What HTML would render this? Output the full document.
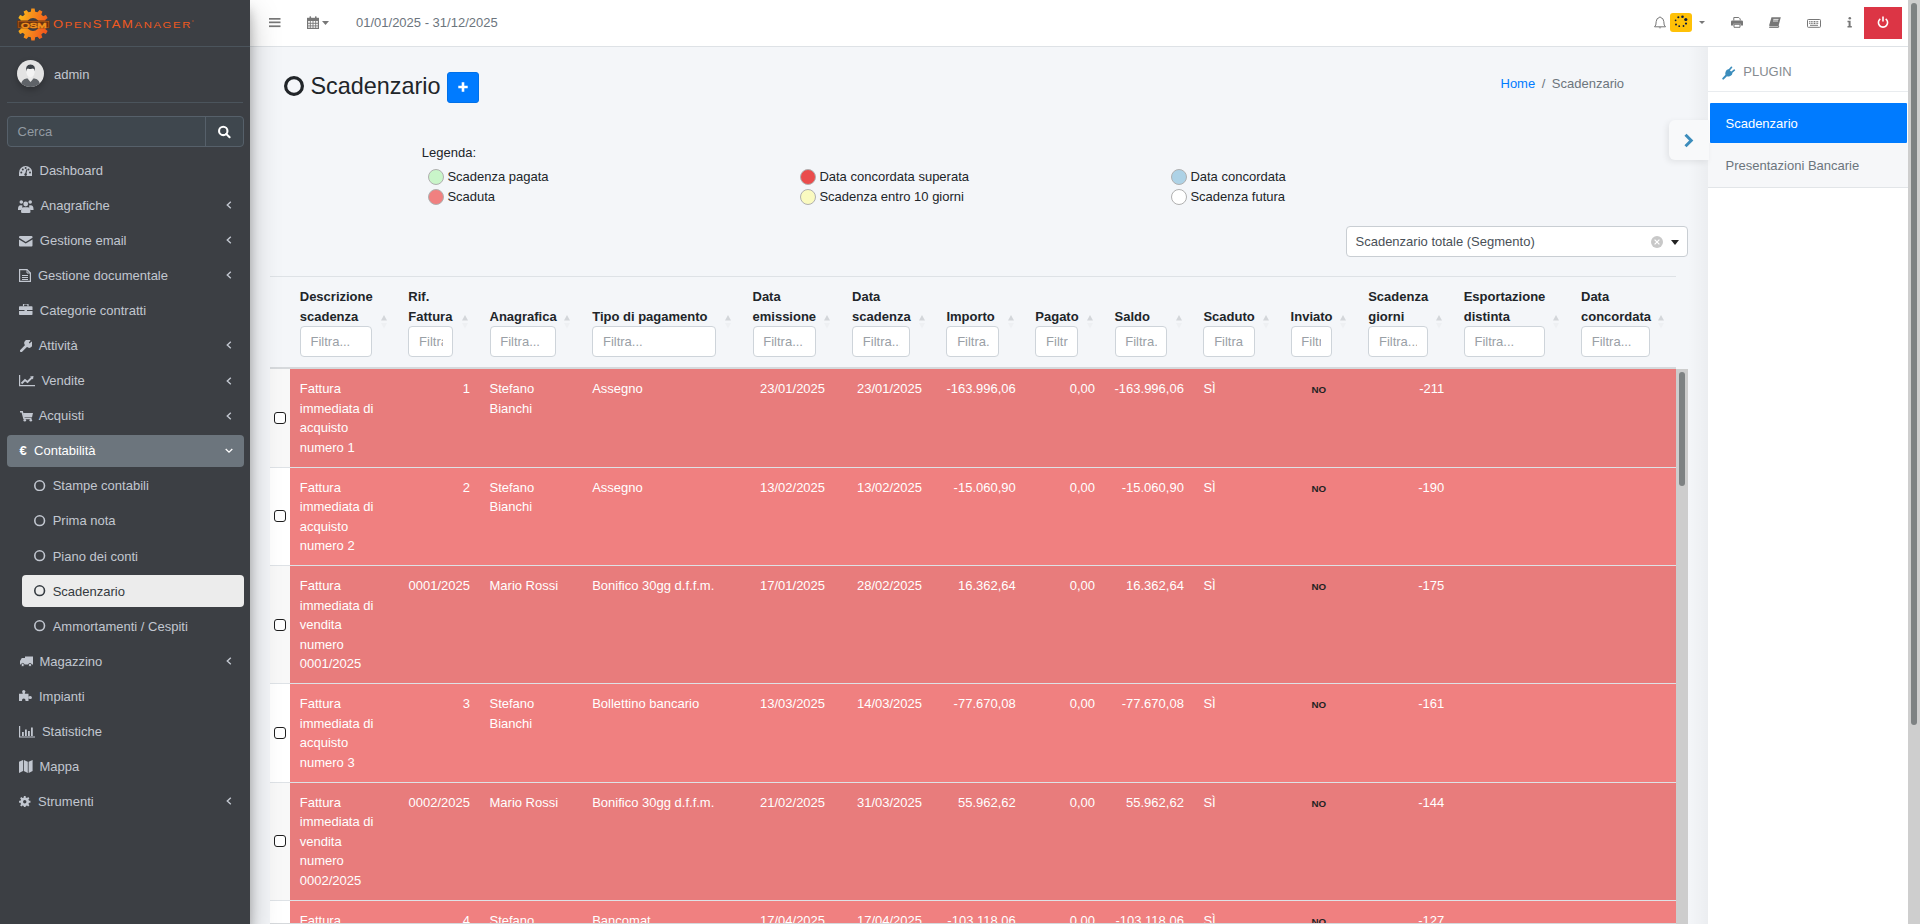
<!DOCTYPE html><html><head><meta charset="utf-8"><style>*{box-sizing:border-box;}
html,body{margin:0;padding:0;}
body{width:1920px;height:924px;overflow:hidden;position:relative;font-family:"Liberation Sans",sans-serif;font-size:13px;line-height:19.5px;color:#212529;background:#f4f6f9;}
.abs{position:absolute;white-space:nowrap;}
svg{display:block;}
#sb{position:absolute;left:0;top:0;width:250px;height:924px;background:#3c3f44;z-index:5;box-shadow:0 14px 28px rgba(0,0,0,.25),0 10px 10px rgba(0,0,0,.22);}
#sb .brandline{position:absolute;left:0;top:46px;width:250px;height:1px;background:#4b545c;}
#sb .userline{position:absolute;left:7px;top:102px;width:236px;height:1px;background:#4b545c;}
.logo-t{color:#f05a20;font-size:10.8px;line-height:12px;letter-spacing:1.25px;font-weight:400;transform:scaleX(1.3);transform-origin:0 0;}
.logo-t .bc{font-size:10px;}
.logo-t .sc{font-size:8.7px;}
.act1{position:absolute;left:7px;width:237px;height:32px;background:#6c757d;border-radius:4px;}
.act2{position:absolute;left:22px;width:222px;height:32px;background:#ececec;border-radius:4px;}
#nb{position:absolute;left:250px;top:0;width:1658px;height:47px;background:#fff;border-bottom:1px solid #dee2e6;z-index:2;}
#ct{position:absolute;left:0;top:0;width:1908px;height:924px;z-index:1;}
#cs{position:absolute;left:1708px;top:47px;width:200px;height:877px;background:#fff;z-index:3;}
#scroll{position:absolute;left:1908px;top:0;width:12px;height:924px;background:#cecece;z-index:6;}
#scroll .th{position:absolute;left:3px;top:3px;width:6px;height:722px;border-radius:3px;background:#7e8283;}
.lg{position:absolute;white-space:nowrap;color:#212529;}
.dot{position:absolute;width:16.6px;height:16.6px;border-radius:50%;border:1px solid #b0b0b0;}
.hd{font-weight:700;color:#212529;}
.flt{position:absolute;top:326px;height:31px;background:#fff;border:1px solid #ced4da;border-radius:4px;overflow:hidden;}
.flt span{position:absolute;left:9.75px;top:4.9px;color:#9aa0a6;white-space:nowrap;overflow:hidden;}
.td{color:#fff;white-space:nowrap;}
.no{font-size:9.75px;font-weight:700;color:#222;text-align:center;line-height:19.5px;padding-top:1px;}
.cbx{position:absolute;width:12px;height:12px;border:1.5px solid #1e1e1e;border-radius:3px;background:#fff;}
</style></head><body>
<div id="sb">
<svg class="abs" style="left:17px;top:8px" width="33" height="34" viewBox="0 0 33 34" ><defs><linearGradient id="lg1" x1="0" y1="0" x2="1" y2="0.3"><stop offset="0" stop-color="#fcc419"/><stop offset="1" stop-color="#f25a1d"/></linearGradient></defs><path d="M28.56 13.14 L28.82 14.33 L31.91 14.83 L31.91 18.17 L28.82 18.67 L28.56 19.86 L28.56 19.86 L28.18 21.03 L30.62 23.01 L28.94 25.90 L26.02 24.79 L25.19 25.69 L25.19 25.69 L24.29 26.52 L25.40 29.44 L22.51 31.12 L20.53 28.68 L19.36 29.06 L19.36 29.06 L18.17 29.32 L17.67 32.41 L14.33 32.41 L13.83 29.32 L12.64 29.06 L12.64 29.06 L11.47 28.68 L9.49 31.12 L6.60 29.44 L7.71 26.52 L6.81 25.69 L6.81 25.69 L5.98 24.79 L3.06 25.90 L1.38 23.01 L3.82 21.03 L3.44 19.86 L3.44 19.86 L3.18 18.67 L0.09 18.17 L0.09 14.83 L3.18 14.33 L3.44 13.14 L3.44 13.14 L3.82 11.97 L1.38 9.99 L3.06 7.10 L5.98 8.21 L6.81 7.31 L6.81 7.31 L7.71 6.48 L6.60 3.56 L9.49 1.88 L11.47 4.32 L12.64 3.94 L12.64 3.94 L13.83 3.68 L14.33 0.59 L17.67 0.59 L18.17 3.68 L19.36 3.94 L19.36 3.94 L20.53 4.32 L22.51 1.88 L25.40 3.56 L24.29 6.48 L25.19 7.31 L25.19 7.31 L26.02 8.21 L28.94 7.10 L30.62 9.99 L28.18 11.97 L28.56 13.14Z" fill="url(#lg1)"/><circle cx="16" cy="16.5" r="6.5" fill="#3c3f44"/><rect x="0" y="12.5" width="33" height="7.8" fill="#6b3410"/><rect x="1.2" y="13.3" width="30.6" height="6.2" fill="none" stroke="#c8661a" stroke-width=".5"/><text x="4" y="19.7" font-family="Liberation Sans" font-size="8" fill="none" stroke="#f0901c" stroke-width=".7" textLength="25.5" lengthAdjust="spacingAndGlyphs">OSM</text></svg>
<div class="abs logo-t" style="left:53px;top:18.4px"><span class="bc">O</span><span class="sc">PEN</span><span class="bc">STAM</span><span class="sc">ANAGER</span></div>
<div class="abs" style="left:191.5px;top:19.5px;width:2.8px;height:2.8px;border-radius:50%;background:#e0561e;opacity:.45"></div>
<div class="brandline"></div>
<div class="abs avatar" style="left:17px;top:60px;width:27px;height:27px;border-radius:50%;overflow:hidden;background:#e3e3e3;box-shadow:0 3px 6px rgba(0,0,0,.25)"><svg width="27" height="27" viewBox="0 0 27 27"><path d="M3.5 27 Q4 19.5 9.5 18.6 L17.5 18.6 Q23 19.5 23.5 27Z" fill="#5f6368"/><path d="M10.5 18.6 L13.5 22 L16.5 18.6Z" fill="#e9e9e9"/><rect x="11.2" y="15" width="4.6" height="4" fill="#ececec"/><ellipse cx="13.5" cy="12.2" rx="4.1" ry="5" fill="#f3f3f3"/><path d="M9 11.5 Q8.3 4.5 13.5 4.5 Q18.8 4.5 18 11.5 Q17.6 8.8 16 8.6 Q13.5 9.3 10.8 8.4 Q9.4 9 9 11.5Z" fill="#3d4248"/></svg></div>
<div class="abs" style="left:54px;top:64.8px;color:#c2c7d0">admin</div>
<div class="userline"></div>
<div class="abs" style="left:7px;top:116px;width:237px;height:31px;border:1px solid #56606a;border-radius:4px;background:#3f474e"></div>
<div class="abs" style="left:205px;top:117px;width:1px;height:29px;background:#56606a"></div>
<div class="abs" style="left:17.5px;top:121.8px;color:#939ba2">Cerca</div>
<svg class="abs" style="left:217px;top:124px" width="14" height="15" viewBox="0 0 14 15" ><circle cx="6.25" cy="6.9" r="4.2" fill="none" stroke="#fff" stroke-width="2.1"/><path d="M9.3 10 L12.6 13.3" stroke="#fff" stroke-width="2" stroke-linecap="round"/></svg>
<svg class="abs" style="left:19.2px;top:165.8px" width="13.3" height="10.2" viewBox="0 0 13.3 10.2" ><path d="M0 10.2 L0 6.65 A6.65 6.65 0 0 1 13.3 6.65 L13.3 10.2 Z" fill="#c2c7d0"/><circle cx="2.3" cy="6.6" r="1" fill="#3c3f44"/><circle cx="3.8" cy="3.4" r="1" fill="#3c3f44"/><circle cx="6.65" cy="1.9" r="1" fill="#3c3f44"/><circle cx="9.5" cy="3.4" r="1" fill="#3c3f44"/><circle cx="11" cy="6.6" r="1" fill="#3c3f44"/><path d="M6.6 8.5 L7.9 3.4" stroke="#3c3f44" stroke-width="1.1"/><circle cx="6.65" cy="8.6" r="1.3" fill="#3c3f44"/></svg>
<div class="abs" style="left:39.5px;top:160.95px;color:#c2c7d0">Dashboard</div>
<svg class="abs" style="left:17.5px;top:198.5px" width="16" height="15" viewBox="0 0 16 15" ><circle cx="3.3" cy="3" r="1.8" fill="#c2c7d0"/><circle cx="12.2" cy="3" r="1.8" fill="#c2c7d0"/><circle cx="7.7" cy="5" r="2.4" fill="#c2c7d0"/><path d="M0 10 Q0 6 3 6.2 L4.5 6.5 Q4 8 4.5 9.5 L3 11 L0 11Z" fill="#c2c7d0"/><path d="M15.5 10 Q15.5 6 12.5 6.2 L11 6.5 Q11.5 8 11 9.5 L12.5 11 L15.5 11Z" fill="#c2c7d0"/><path d="M3 13 Q3 8 6 8.2 L9.5 8.2 Q12.5 8 12.5 13 Q12.5 14 11 14 L4.5 14 Q3 14 3 13Z" fill="#c2c7d0"/></svg>
<div class="abs" style="left:40.4px;top:196.00px;color:#c2c7d0">Anagrafiche</div>
<svg class="abs" style="left:225.5px;top:201.25px" width="6" height="8" viewBox="0 0 6 8" ><path d="M4.8 .8 L1.3 4 L4.8 7.2" fill="none" stroke="#c2c7d0" stroke-width="1.4"/></svg>
<svg class="abs" style="left:19.2px;top:235.5px" width="14" height="11" viewBox="0 0 14 11" ><path d="M0 1 Q0 0 1 0 L12.5 0 Q13.5 0 13.5 1 L13.5 1.8 L6.75 6 L0 1.8Z" fill="#c2c7d0"/><path d="M0 3.6 L6.75 7.6 L13.5 3.6 L13.5 9.5 Q13.5 10.5 12.5 10.5 L1 10.5 Q0 10.5 0 9.5Z" fill="#c2c7d0"/></svg>
<div class="abs" style="left:39.8px;top:231.05px;color:#c2c7d0">Gestione email</div>
<svg class="abs" style="left:225.5px;top:236.29999999999998px" width="6" height="8" viewBox="0 0 6 8" ><path d="M4.8 .8 L1.3 4 L4.8 7.2" fill="none" stroke="#c2c7d0" stroke-width="1.4"/></svg>
<svg class="abs" style="left:19.2px;top:269px" width="12" height="13" viewBox="0 0 12 13" ><path d="M.6 .6 L8 .6 L11.4 4 L11.4 12.4 L.6 12.4Z" fill="none" stroke="#c2c7d0" stroke-width="1.2"/><path d="M8 .6 L8 4 L11.4 4" fill="none" stroke="#c2c7d0" stroke-width="1"/><path d="M3 6.5H9M3 8.5H9M3 10.5H9" stroke="#c2c7d0" stroke-width="1"/></svg>
<div class="abs" style="left:37.9px;top:266.10px;color:#c2c7d0">Gestione documentale</div>
<svg class="abs" style="left:225.5px;top:271.34999999999997px" width="6" height="8" viewBox="0 0 6 8" ><path d="M4.8 .8 L1.3 4 L4.8 7.2" fill="none" stroke="#c2c7d0" stroke-width="1.4"/></svg>
<svg class="abs" style="left:19.2px;top:304px" width="14" height="11" viewBox="0 0 14 11" ><path d="M4.5 2.2 L4.5 .8 Q4.5 0 5.3 0 L8.2 0 Q9 0 9 .8 L9 2.2" fill="none" stroke="#c2c7d0" stroke-width="1.2"/><path d="M0 3 Q0 2.2 .8 2.2 L12.7 2.2 Q13.5 2.2 13.5 3 L13.5 6 L0 6Z" fill="#c2c7d0"/><path d="M0 7 L13.5 7 L13.5 10.2 Q13.5 11 12.7 11 L.8 11 Q0 11 0 10.2Z" fill="#c2c7d0"/><rect x="5.5" y="5.5" width="2.5" height="2" fill="#c2c7d0"/></svg>
<div class="abs" style="left:39.8px;top:301.15px;color:#c2c7d0">Categorie contratti</div>
<svg class="abs" style="left:19.5px;top:340px" width="12" height="12" viewBox="0 0 12 12" ><path d="M1.2 10.8 L6 6" stroke="#c2c7d0" stroke-width="2.6" stroke-linecap="round"/><path d="M5.3 5.5 A3.3 3.3 0 0 1 10.5 .6 L8.8 2.6 L9.6 3.4 L11.6 1.6 A3.3 3.3 0 0 1 6.8 6.8Z" fill="#c2c7d0"/></svg>
<div class="abs" style="left:38.7px;top:336.20px;color:#c2c7d0">Attività</div>
<svg class="abs" style="left:225.5px;top:341.45px" width="6" height="8" viewBox="0 0 6 8" ><path d="M4.8 .8 L1.3 4 L4.8 7.2" fill="none" stroke="#c2c7d0" stroke-width="1.4"/></svg>
<svg class="abs" style="left:18.9px;top:375px" width="16" height="12" viewBox="0 0 16 12" ><path d="M.6 0 L.6 10.6 L16 10.6" fill="none" stroke="#c2c7d0" stroke-width="1.2"/><path d="M2.5 8.5 L6 5 L8.5 7 L13 2.5" fill="none" stroke="#c2c7d0" stroke-width="1.8"/><path d="M11 1.5 L14.5 1 L14 4.5Z" fill="#c2c7d0"/></svg>
<div class="abs" style="left:41.4px;top:371.25px;color:#c2c7d0">Vendite</div>
<svg class="abs" style="left:225.5px;top:376.5px" width="6" height="8" viewBox="0 0 6 8" ><path d="M4.8 .8 L1.3 4 L4.8 7.2" fill="none" stroke="#c2c7d0" stroke-width="1.4"/></svg>
<svg class="abs" style="left:19.7px;top:410.5px" width="13" height="11" viewBox="0 0 13 11" ><path d="M0 .8 L2.2 .8 L4 7.5 L11.5 7.5" fill="none" stroke="#c2c7d0" stroke-width="1.6"/><path d="M3 2 L13 2 L12 6.3 L4 6.3Z" fill="#c2c7d0"/><circle cx="4.8" cy="9.3" r="1.3" fill="#c2c7d0"/><circle cx="10.8" cy="9.3" r="1.3" fill="#c2c7d0"/></svg>
<div class="abs" style="left:38.7px;top:406.30px;color:#c2c7d0">Acquisti</div>
<svg class="abs" style="left:225.5px;top:411.54999999999995px" width="6" height="8" viewBox="0 0 6 8" ><path d="M4.8 .8 L1.3 4 L4.8 7.2" fill="none" stroke="#c2c7d0" stroke-width="1.4"/></svg>
<div class="act1" style="top:435.05px"></div>
<div class="abs" style="left:19.6px;top:441.35px;color:#fff;font-weight:700">€</div>
<div class="abs" style="left:34.1px;top:441.35px;color:#fff">Contabilità</div>
<svg class="abs" style="left:224.6px;top:447.5px" width="8" height="6" viewBox="0 0 8 6" ><path d="M.7 1 L4 4.2 L7.3 1" fill="none" stroke="#fff" stroke-width="1.3"/></svg>
<svg class="abs" style="left:34.4px;top:480.2px" width="11.3" height="11.3" viewBox="0 0 11.3 11.3" ><circle cx="5.65" cy="5.65" r="4.8500000000000005" fill="none" stroke="#c2c7d0" stroke-width="1.6"/></svg>
<div class="abs" style="left:52.7px;top:476.40px;color:#c2c7d0">Stampe contabili</div>
<svg class="abs" style="left:34.4px;top:515.25px" width="11.3" height="11.3" viewBox="0 0 11.3 11.3" ><circle cx="5.65" cy="5.65" r="4.8500000000000005" fill="none" stroke="#c2c7d0" stroke-width="1.6"/></svg>
<div class="abs" style="left:52.7px;top:511.45px;color:#c2c7d0">Prima nota</div>
<svg class="abs" style="left:34.4px;top:550.3px" width="11.3" height="11.3" viewBox="0 0 11.3 11.3" ><circle cx="5.65" cy="5.65" r="4.8500000000000005" fill="none" stroke="#c2c7d0" stroke-width="1.6"/></svg>
<div class="abs" style="left:52.7px;top:546.50px;color:#c2c7d0">Piano dei conti</div>
<div class="act2" style="top:575.05px"></div>
<svg class="abs" style="left:34.4px;top:585.3499999999999px" width="11.3" height="11.3" viewBox="0 0 11.3 11.3" ><circle cx="5.65" cy="5.65" r="4.8500000000000005" fill="none" stroke="#343a40" stroke-width="1.6"/></svg>
<div class="abs" style="left:52.7px;top:581.55px;color:#343a40">Scadenzario</div>
<svg class="abs" style="left:34.4px;top:620.3999999999999px" width="11.3" height="11.3" viewBox="0 0 11.3 11.3" ><circle cx="5.65" cy="5.65" r="4.8500000000000005" fill="none" stroke="#c2c7d0" stroke-width="1.6"/></svg>
<div class="abs" style="left:52.7px;top:616.60px;color:#c2c7d0">Ammortamenti / Cespiti</div>
<svg class="abs" style="left:19.7px;top:656.3px" width="13" height="11" viewBox="0 0 13 11" ><path d="M5 0.5 L13 .5 L13 8.5 L5 8.5Z" fill="#c2c7d0"/><path d="M0 5 L1.8 2 L5 2 L5 8.5 L0 8.5Z" fill="#c2c7d0"/><circle cx="2.7" cy="9" r="1.6" fill="#c2c7d0" stroke="#3c3f44" stroke-width=".8"/><circle cx="10" cy="9" r="1.6" fill="#c2c7d0" stroke="#3c3f44" stroke-width=".8"/></svg>
<div class="abs" style="left:39.4px;top:651.65px;color:#c2c7d0">Magazzino</div>
<svg class="abs" style="left:225.5px;top:656.8999999999999px" width="6" height="8" viewBox="0 0 6 8" ><path d="M4.8 .8 L1.3 4 L4.8 7.2" fill="none" stroke="#c2c7d0" stroke-width="1.4"/></svg>
<svg class="abs" style="left:18.9px;top:690px" width="13" height="11" viewBox="0 0 13 11" ><path d="M0 3.8 L9.5 3.8 L9.5 11 L6.6 11 Q6.6 8.6 4.75 8.6 Q2.9 8.6 2.9 11 L0 11Z" fill="#c2c7d0"/><rect x="3.7" y="1.8" width="2.1" height="2.2" fill="#c2c7d0"/><circle cx="4.75" cy="1.6" r="1.6" fill="#c2c7d0"/><rect x="9.3" y="6.4" width="2" height="2.1" fill="#c2c7d0"/><circle cx="11.4" cy="7.45" r="1.5" fill="#c2c7d0"/></svg>
<div class="abs" style="left:39px;top:686.70px;color:#c2c7d0">Impianti</div>
<svg class="abs" style="left:18.9px;top:725.5px" width="16" height="12" viewBox="0 0 16 12" ><path d="M.6 0 L.6 11 L16 11" fill="none" stroke="#c2c7d0" stroke-width="1.2"/><rect x="3" y="6" width="1.8" height="4" fill="#c2c7d0"/><rect x="6" y="3.5" width="1.8" height="6.5" fill="#c2c7d0"/><rect x="9" y="5" width="1.8" height="5" fill="#c2c7d0"/><rect x="12" y="1.5" width="1.8" height="8.5" fill="#c2c7d0"/></svg>
<div class="abs" style="left:41.9px;top:721.75px;color:#c2c7d0">Statistiche</div>
<svg class="abs" style="left:18.9px;top:759.8px" width="14" height="13" viewBox="0 0 14 13" ><path d="M0 1.8 L4 0 L4 11 L0 13Z" fill="#c2c7d0"/><path d="M4.8 0 L8.8 1.8 L8.8 13 L4.8 11Z" fill="#c2c7d0"/><path d="M9.6 1.8 L13.6 0 L13.6 11 L9.6 13Z" fill="#c2c7d0"/></svg>
<div class="abs" style="left:39.5px;top:756.80px;color:#c2c7d0">Mappa</div>
<svg class="abs" style="left:19.1px;top:795.5px" width="11.5" height="11.5" viewBox="0 0 11.5 11.5" ><path d="M9.72 4.10 L9.95 4.81 L11.43 4.85 L11.43 6.65 L9.95 6.69 L9.72 7.40 L9.72 7.40 L9.38 8.05 L10.40 9.13 L9.13 10.40 L8.05 9.38 L7.40 9.72 L7.40 9.72 L6.69 9.95 L6.65 11.43 L4.85 11.43 L4.81 9.95 L4.10 9.72 L4.10 9.72 L3.45 9.38 L2.37 10.40 L1.10 9.13 L2.12 8.05 L1.78 7.40 L1.78 7.40 L1.55 6.69 L0.07 6.65 L0.07 4.85 L1.55 4.81 L1.78 4.10 L1.78 4.10 L2.12 3.45 L1.10 2.37 L2.37 1.10 L3.45 2.12 L4.10 1.78 L4.10 1.78 L4.81 1.55 L4.85 0.07 L6.65 0.07 L6.69 1.55 L7.40 1.78 L7.40 1.78 L8.05 2.12 L9.13 1.10 L10.40 2.37 L9.38 3.45 L9.72 4.10Z" fill="#c2c7d0"/><circle cx="5.75" cy="5.75" r="1.7" fill="#3c3f44"/></svg>
<div class="abs" style="left:38px;top:791.85px;color:#c2c7d0">Strumenti</div>
<svg class="abs" style="left:225.5px;top:797.0999999999999px" width="6" height="8" viewBox="0 0 6 8" ><path d="M4.8 .8 L1.3 4 L4.8 7.2" fill="none" stroke="#c2c7d0" stroke-width="1.4"/></svg>
</div>
<div id="nb">
<svg class="abs" style="left:19px;top:18px" width="12" height="10" viewBox="0 0 12 10" ><rect x="0" y="0" width="11.5" height="1.7" fill="#777"/><rect x="0" y="3.5" width="11.5" height="1.7" fill="#777"/><rect x="0" y="7.4" width="11.5" height="1.7" fill="#777"/></svg>
<svg class="abs" style="left:57px;top:16px" width="12" height="13" viewBox="0 0 12 13" ><rect x=".6" y="2.4" width="10.8" height="10" fill="none" stroke="#777" stroke-width="1.2"/><rect x=".6" y="2.4" width="10.8" height="2.6" fill="#777"/><path d="M.6 7.3H11.4M.6 9.9H11.4M3.3 5V12.4M6 5V12.4M8.7 5V12.4" stroke="#777" stroke-width=".9"/><rect x="2.5" y=".3" width="1.6" height="3" rx=".6" fill="#777"/><rect x="8" y=".3" width="1.6" height="3" rx=".6" fill="#777"/></svg>
<svg class="abs" style="left:72.30000000000001px;top:21px" width="7" height="4" viewBox="0 0 7 4" ><path d="M0 0H7L3.5 4Z" fill="#777"/></svg>
<div class="abs" style="left:106px;top:12.8px;color:#6c757d">01/01/2025 - 31/12/2025</div>
<svg class="abs" style="left:1403.5px;top:16px" width="12" height="13" viewBox="0 0 12 13" ><path d="M6 .8 Q6.6 .8 6.6 1.5 Q9.5 2 9.8 5.5 L10.2 9 L11.5 10.8 L.5 10.8 L1.8 9 L2.2 5.5 Q2.5 2 5.4 1.5 Q5.4 .8 6 .8Z" fill="none" stroke="#777" stroke-width="1"/><path d="M4.6 11.5 Q6 13.2 7.4 11.5Z" fill="#777"/></svg>
<div class="abs" style="left:1420px;top:13px;width:22px;height:19px;border-radius:3px;background:#ffc107"></div>
<svg class="abs" style="left:1420px;top:13px" width="22" height="19" viewBox="0 0 22 19" ><circle cx="8.33" cy="4.2" r="1.05" fill="#0d1b3e"/><circle cx="12.5" cy="3.8" r="1.3" fill="#0d1b3e"/><circle cx="15.8" cy="6.5" r="1.6" fill="#0d1b3e"/><circle cx="16.0" cy="10.6" r="1.1" fill="#0d1b3e"/><circle cx="13.5" cy="13.0" r="0.9" fill="#0d1b3e"/><circle cx="9.2" cy="13.2" r="0.9" fill="#0d1b3e"/><circle cx="6.0" cy="11.5" r="1.0" fill="#0d1b3e"/><circle cx="5.6" cy="7.3" r="0.9" fill="#0d1b3e"/></svg>
<svg class="abs" style="left:1449px;top:21px" width="6" height="3" viewBox="0 0 6 3" ><path d="M0 0H6L3 3Z" fill="#777"/></svg>
<svg class="abs" style="left:1481px;top:17px" width="12" height="11" viewBox="0 0 12 11" ><path d="M2.8 3.5 L2.8 .5 L7.8 .5 L9.2 1.9 L9.2 3.5" fill="none" stroke="#777" stroke-width="1"/><path d="M0 4.8 Q0 3.5 1.3 3.5 L10.7 3.5 Q12 3.5 12 4.8 L12 8.5 L9.5 8.5 L9.5 6.8 L2.5 6.8 L2.5 8.5 L0 8.5Z" fill="#777"/><path d="M3 7.3 L9 7.3 L9 10.3 L3 10.3Z" fill="none" stroke="#777" stroke-width="1"/></svg>
<svg class="abs" style="left:1519px;top:17px" width="12" height="11" viewBox="0 0 12 11" ><path d="M2.5 .3 L11.8 .3 L9.5 9 L.8 9 Q0 9 .2 8 Z" fill="#777"/><path d="M.8 9 L9.8 9 L9.3 10.6 L.6 10.6 Q-.2 10.6 .1 9.6" fill="none" stroke="#777" stroke-width="1"/><path d="M4.3 2.4H9.5M4 4H9" stroke="#fff" stroke-width=".8"/></svg>
<svg class="abs" style="left:1557px;top:18.5px" width="14" height="9" viewBox="0 0 14 9" ><rect x=".5" y=".5" width="13" height="7.8" rx=".8" fill="none" stroke="#777" stroke-width="1"/><path d="M2.2 2.6H11.8" stroke="#777" stroke-width="1.1" stroke-dasharray="1 .6"/><path d="M2.2 4.4H11.8" stroke="#777" stroke-width="1.1" stroke-dasharray="1 .6"/><path d="M3 6.3H11" stroke="#777" stroke-width="1"/></svg>
<svg class="abs" style="left:1596.5px;top:16.5px" width="6" height="11" viewBox="0 0 6 11" ><circle cx="2.8" cy="1.3" r="1.3" fill="#777"/><path d="M.5 3.8 L3.6 3.8 L3.6 9 L4.8 9 L4.8 10.4 L.5 10.4 L.5 9 L1.6 9 L1.6 5.2 L.5 5.2Z" fill="#777"/></svg>
<div class="abs" style="left:1614px;top:7px;width:38px;height:32px;background:#dc3545"></div>
<svg class="abs" style="left:1627px;top:16px" width="12" height="12" viewBox="0 0 12 12" ><path d="M3.3 2.8 A4.6 4.6 0 1 0 8.7 2.8" fill="none" stroke="#fff" stroke-width="1.6"/><path d="M6 .4V5.6" stroke="#fff" stroke-width="1.6"/></svg>
</div>
<div id="ct">
<svg class="abs" style="left:284px;top:76px" width="20" height="20" viewBox="0 0 20 20" ><circle cx="10.0" cy="10.0" r="8.4" fill="none" stroke="#212529" stroke-width="3.2"/></svg>
<div class="abs" style="left:310.5px;top:71.5px;font-size:23.4px;line-height:28px;color:#212529">Scadenzario</div>
<div class="abs" style="left:447px;top:72px;width:32px;height:31px;background:#007bff;border-radius:3px;border:1px solid #0070e8"></div>
<svg class="abs" style="left:458px;top:82px" width="10" height="10" viewBox="0 0 10 10" ><path d="M5 .3V9.7M.3 5H9.7" stroke="#fff" stroke-width="2.6"/></svg>
<div class="abs" style="left:1500.5px;top:73.8px;white-space:nowrap;color:#6c757d"><span style="color:#007bff">Home</span><span style="padding:0 6.5px 0 6.5px">/</span>Scadenzario</div>
<div class="lg" style="left:421.8px;top:142.8px">Legenda:</div>
<div class="dot" style="left:427.70px;top:168.80px;background:#c9f5c9"></div>
<div class="lg" style="left:447.40000000000003px;top:166.9px">Scadenza pagata</div>
<div class="dot" style="left:427.70px;top:188.80px;background:#f08080"></div>
<div class="lg" style="left:447.40000000000003px;top:186.9px">Scaduta</div>
<div class="dot" style="left:799.70px;top:168.80px;background:#ea4c4c"></div>
<div class="lg" style="left:819.4px;top:166.9px">Data concordata superata</div>
<div class="dot" style="left:799.70px;top:188.80px;background:#fafac0"></div>
<div class="lg" style="left:819.4px;top:186.9px">Scadenza entro 10 giorni</div>
<div class="dot" style="left:1170.70px;top:168.80px;background:#add2e6"></div>
<div class="lg" style="left:1190.3999999999999px;top:166.9px">Data concordata</div>
<div class="dot" style="left:1170.70px;top:188.80px;background:#ffffff"></div>
<div class="lg" style="left:1190.3999999999999px;top:186.9px">Scadenza futura</div>
<div class="abs" style="left:1345.5px;top:226px;width:342px;height:30.5px;background:#fff;border:1px solid #c9ced3;border-radius:4px"></div>
<div class="abs" style="left:1355.5px;top:232px;color:#495057;white-space:nowrap">Scadenzario totale (Segmento)</div>
<svg class="abs" style="left:1651px;top:236px" width="12" height="12" viewBox="0 0 12 12" ><circle cx="6" cy="6" r="6" fill="#c8c8c8"/><path d="M3.6 3.6L8.4 8.4M8.4 3.6L3.6 8.4" stroke="#fff" stroke-width="1.2"/></svg>
<svg class="abs" style="left:1671px;top:240px" width="8" height="5" viewBox="0 0 8 5" ><path d="M0 0H8L4 5Z" fill="#222"/></svg>
</div>
<div id="tb">
<div class="abs" style="left:270px;top:276px;width:1406px;height:1px;background:#dee2e6"></div>
<div class="abs" style="left:270px;top:367px;width:1406px;height:2px;background:#d6d9dc"></div>
<div class="abs hd" style="left:299.75px;top:306.85px">scadenza</div>
<div class="abs hd" style="left:299.75px;top:287.35px">Descrizione</div>
<div class="flt" style="left:299.75px;width:72.55px"><span style="width:51.05px">Filtra...</span></div>
<svg class="abs" style="left:380.55px;top:315px" width="6" height="6" viewBox="0 0 6 6" ><path d="M3 0L6 5.6H0Z" fill="#d3d6da"/></svg>
<svg class="abs" style="left:380.55px;top:323px" width="6" height="6" viewBox="0 0 6 6" ><path d="M3 5.6L6 0H0Z" fill="#eef0f3"/></svg>
<div class="abs hd" style="left:408.30px;top:306.85px">Fattura</div>
<div class="abs hd" style="left:408.30px;top:287.35px">Rif.</div>
<div class="flt" style="left:408.30px;width:45.20px"><span style="width:23.70px">Filtra...</span></div>
<svg class="abs" style="left:461.75px;top:315px" width="6" height="6" viewBox="0 0 6 6" ><path d="M3 0L6 5.6H0Z" fill="#d3d6da"/></svg>
<svg class="abs" style="left:461.75px;top:323px" width="6" height="6" viewBox="0 0 6 6" ><path d="M3 5.6L6 0H0Z" fill="#eef0f3"/></svg>
<div class="abs hd" style="left:489.50px;top:306.85px">Anagrafica</div>
<div class="flt" style="left:489.50px;width:66.70px"><span style="width:45.20px">Filtra...</span></div>
<svg class="abs" style="left:564.45px;top:315px" width="6" height="6" viewBox="0 0 6 6" ><path d="M3 0L6 5.6H0Z" fill="#d3d6da"/></svg>
<svg class="abs" style="left:564.45px;top:323px" width="6" height="6" viewBox="0 0 6 6" ><path d="M3 5.6L6 0H0Z" fill="#eef0f3"/></svg>
<div class="abs hd" style="left:592.20px;top:306.85px">Tipo di pagamento</div>
<div class="flt" style="left:592.20px;width:124.30px"><span style="width:102.80px">Filtra...</span></div>
<svg class="abs" style="left:724.75px;top:315px" width="6" height="6" viewBox="0 0 6 6" ><path d="M3 0L6 5.6H0Z" fill="#d3d6da"/></svg>
<svg class="abs" style="left:724.75px;top:323px" width="6" height="6" viewBox="0 0 6 6" ><path d="M3 5.6L6 0H0Z" fill="#eef0f3"/></svg>
<div class="abs hd" style="left:752.50px;top:306.85px">emissione</div>
<div class="abs hd" style="left:752.50px;top:287.35px">Data</div>
<div class="flt" style="left:752.50px;width:63.60px"><span style="width:42.10px">Filtra...</span></div>
<svg class="abs" style="left:824.35px;top:315px" width="6" height="6" viewBox="0 0 6 6" ><path d="M3 0L6 5.6H0Z" fill="#d3d6da"/></svg>
<svg class="abs" style="left:824.35px;top:323px" width="6" height="6" viewBox="0 0 6 6" ><path d="M3 5.6L6 0H0Z" fill="#eef0f3"/></svg>
<div class="abs hd" style="left:852.10px;top:306.85px">scadenza</div>
<div class="abs hd" style="left:852.10px;top:287.35px">Data</div>
<div class="flt" style="left:852.10px;width:58.30px"><span style="width:36.80px">Filtra...</span></div>
<svg class="abs" style="left:918.65px;top:315px" width="6" height="6" viewBox="0 0 6 6" ><path d="M3 0L6 5.6H0Z" fill="#d3d6da"/></svg>
<svg class="abs" style="left:918.65px;top:323px" width="6" height="6" viewBox="0 0 6 6" ><path d="M3 5.6L6 0H0Z" fill="#eef0f3"/></svg>
<div class="abs hd" style="left:946.40px;top:306.85px">Importo</div>
<div class="flt" style="left:946.40px;width:52.90px"><span style="width:31.40px">Filtra...</span></div>
<svg class="abs" style="left:1007.55px;top:315px" width="6" height="6" viewBox="0 0 6 6" ><path d="M3 0L6 5.6H0Z" fill="#d3d6da"/></svg>
<svg class="abs" style="left:1007.55px;top:323px" width="6" height="6" viewBox="0 0 6 6" ><path d="M3 5.6L6 0H0Z" fill="#eef0f3"/></svg>
<div class="abs hd" style="left:1035.30px;top:306.85px">Pagato</div>
<div class="flt" style="left:1035.30px;width:43.20px"><span style="width:21.70px">Filtra...</span></div>
<svg class="abs" style="left:1086.75px;top:315px" width="6" height="6" viewBox="0 0 6 6" ><path d="M3 0L6 5.6H0Z" fill="#d3d6da"/></svg>
<svg class="abs" style="left:1086.75px;top:323px" width="6" height="6" viewBox="0 0 6 6" ><path d="M3 5.6L6 0H0Z" fill="#eef0f3"/></svg>
<div class="abs hd" style="left:1114.50px;top:306.85px">Saldo</div>
<div class="flt" style="left:1114.50px;width:52.90px"><span style="width:31.40px">Filtra...</span></div>
<svg class="abs" style="left:1175.65px;top:315px" width="6" height="6" viewBox="0 0 6 6" ><path d="M3 0L6 5.6H0Z" fill="#d3d6da"/></svg>
<svg class="abs" style="left:1175.65px;top:323px" width="6" height="6" viewBox="0 0 6 6" ><path d="M3 5.6L6 0H0Z" fill="#eef0f3"/></svg>
<div class="abs hd" style="left:1203.40px;top:306.85px">Scaduto</div>
<div class="flt" style="left:1203.40px;width:51.20px"><span style="width:29.70px">Filtra...</span></div>
<svg class="abs" style="left:1262.85px;top:315px" width="6" height="6" viewBox="0 0 6 6" ><path d="M3 0L6 5.6H0Z" fill="#d3d6da"/></svg>
<svg class="abs" style="left:1262.85px;top:323px" width="6" height="6" viewBox="0 0 6 6" ><path d="M3 5.6L6 0H0Z" fill="#eef0f3"/></svg>
<div class="abs hd" style="left:1290.60px;top:306.85px">Inviato</div>
<div class="flt" style="left:1290.60px;width:41.60px"><span style="width:20.10px">Filtra...</span></div>
<svg class="abs" style="left:1340.45px;top:315px" width="6" height="6" viewBox="0 0 6 6" ><path d="M3 0L6 5.6H0Z" fill="#d3d6da"/></svg>
<svg class="abs" style="left:1340.45px;top:323px" width="6" height="6" viewBox="0 0 6 6" ><path d="M3 5.6L6 0H0Z" fill="#eef0f3"/></svg>
<div class="abs hd" style="left:1368.20px;top:306.85px">giorni</div>
<div class="abs hd" style="left:1368.20px;top:287.35px">Scadenza</div>
<div class="flt" style="left:1368.20px;width:59.50px"><span style="width:38.00px">Filtra...</span></div>
<svg class="abs" style="left:1435.95px;top:315px" width="6" height="6" viewBox="0 0 6 6" ><path d="M3 0L6 5.6H0Z" fill="#d3d6da"/></svg>
<svg class="abs" style="left:1435.95px;top:323px" width="6" height="6" viewBox="0 0 6 6" ><path d="M3 5.6L6 0H0Z" fill="#eef0f3"/></svg>
<div class="abs hd" style="left:1463.70px;top:306.85px">distinta</div>
<div class="abs hd" style="left:1463.70px;top:287.35px">Esportazione</div>
<div class="flt" style="left:1463.70px;width:81.30px"><span style="width:59.80px">Filtra...</span></div>
<svg class="abs" style="left:1553.25px;top:315px" width="6" height="6" viewBox="0 0 6 6" ><path d="M3 0L6 5.6H0Z" fill="#d3d6da"/></svg>
<svg class="abs" style="left:1553.25px;top:323px" width="6" height="6" viewBox="0 0 6 6" ><path d="M3 5.6L6 0H0Z" fill="#eef0f3"/></svg>
<div class="abs hd" style="left:1581.00px;top:306.85px">concordata</div>
<div class="abs hd" style="left:1581.00px;top:287.35px">Data</div>
<div class="flt" style="left:1581.00px;width:68.95px"><span style="width:47.45px">Filtra...</span></div>
<svg class="abs" style="left:1658.2px;top:315px" width="6" height="6" viewBox="0 0 6 6" ><path d="M3 0L6 5.6H0Z" fill="#d3d6da"/></svg>
<svg class="abs" style="left:1658.2px;top:323px" width="6" height="6" viewBox="0 0 6 6" ><path d="M3 5.6L6 0H0Z" fill="#eef0f3"/></svg>
<div id="rows">
<div class="abs" style="left:270px;top:369.00px;width:20px;height:97.5px;background:#f8f8f8"></div>
<div class="abs" style="left:290px;top:369.00px;width:1386.2px;height:97.5px;background:#e87c7c"></div>
<div class="cbx" style="left:274.3px;top:411.75px"></div>
<div class="abs td" style="left:299.75px;top:379.25px;width:89.05px;text-align:left">Fattura<br>immediata di<br>acquisto<br>numero 1</div>
<div class="abs td" style="left:408.30px;top:379.25px;width:61.70px;text-align:right">1</div>
<div class="abs td" style="left:489.50px;top:379.25px;width:83.20px;text-align:left">Stefano<br>Bianchi</div>
<div class="abs td" style="left:592.20px;top:379.25px;width:140.80px;text-align:left">Assegno</div>
<div class="abs td" style="left:752.50px;top:379.25px;width:80.10px;text-align:center">23/01/2025</div>
<div class="abs td" style="left:852.10px;top:379.25px;width:74.80px;text-align:center">23/01/2025</div>
<div class="abs td" style="left:946.40px;top:379.25px;width:69.40px;text-align:right">-163.996,06</div>
<div class="abs td" style="left:1035.30px;top:379.25px;width:59.70px;text-align:right">0,00</div>
<div class="abs td" style="left:1114.50px;top:379.25px;width:69.40px;text-align:right">-163.996,06</div>
<div class="abs td" style="left:1203.40px;top:379.25px;width:67.70px;text-align:left">SÌ</div>
<div class="abs no" style="left:1289.70px;top:379.25px;width:58.10px">NO</div>
<div class="abs td" style="left:1368.20px;top:379.25px;width:76.00px;text-align:right">-211</div>
<div class="abs" style="left:270px;top:466.50px;width:1406px;height:1px;background:#dee2e6"></div>
<div class="abs" style="left:270px;top:467.50px;width:20px;height:97.5px;background:#ffffff"></div>
<div class="abs" style="left:290px;top:467.50px;width:1386.2px;height:97.5px;background:#f08080"></div>
<div class="cbx" style="left:274.3px;top:510.25px"></div>
<div class="abs td" style="left:299.75px;top:477.75px;width:89.05px;text-align:left">Fattura<br>immediata di<br>acquisto<br>numero 2</div>
<div class="abs td" style="left:408.30px;top:477.75px;width:61.70px;text-align:right">2</div>
<div class="abs td" style="left:489.50px;top:477.75px;width:83.20px;text-align:left">Stefano<br>Bianchi</div>
<div class="abs td" style="left:592.20px;top:477.75px;width:140.80px;text-align:left">Assegno</div>
<div class="abs td" style="left:752.50px;top:477.75px;width:80.10px;text-align:center">13/02/2025</div>
<div class="abs td" style="left:852.10px;top:477.75px;width:74.80px;text-align:center">13/02/2025</div>
<div class="abs td" style="left:946.40px;top:477.75px;width:69.40px;text-align:right">-15.060,90</div>
<div class="abs td" style="left:1035.30px;top:477.75px;width:59.70px;text-align:right">0,00</div>
<div class="abs td" style="left:1114.50px;top:477.75px;width:69.40px;text-align:right">-15.060,90</div>
<div class="abs td" style="left:1203.40px;top:477.75px;width:67.70px;text-align:left">SÌ</div>
<div class="abs no" style="left:1289.70px;top:477.75px;width:58.10px">NO</div>
<div class="abs td" style="left:1368.20px;top:477.75px;width:76.00px;text-align:right">-190</div>
<div class="abs" style="left:270px;top:565.00px;width:1406px;height:1px;background:#dee2e6"></div>
<div class="abs" style="left:270px;top:566.00px;width:20px;height:117.0px;background:#f8f8f8"></div>
<div class="abs" style="left:290px;top:566.00px;width:1386.2px;height:117.0px;background:#e87c7c"></div>
<div class="cbx" style="left:274.3px;top:618.50px"></div>
<div class="abs td" style="left:299.75px;top:576.25px;width:89.05px;text-align:left">Fattura<br>immediata di<br>vendita<br>numero<br>0001/2025</div>
<div class="abs td" style="left:408.30px;top:576.25px;width:61.70px;text-align:right">0001/2025</div>
<div class="abs td" style="left:489.50px;top:576.25px;width:83.20px;text-align:left">Mario Rossi</div>
<div class="abs td" style="left:592.20px;top:576.25px;width:140.80px;text-align:left">Bonifico 30gg d.f.f.m.</div>
<div class="abs td" style="left:752.50px;top:576.25px;width:80.10px;text-align:center">17/01/2025</div>
<div class="abs td" style="left:852.10px;top:576.25px;width:74.80px;text-align:center">28/02/2025</div>
<div class="abs td" style="left:946.40px;top:576.25px;width:69.40px;text-align:right">16.362,64</div>
<div class="abs td" style="left:1035.30px;top:576.25px;width:59.70px;text-align:right">0,00</div>
<div class="abs td" style="left:1114.50px;top:576.25px;width:69.40px;text-align:right">16.362,64</div>
<div class="abs td" style="left:1203.40px;top:576.25px;width:67.70px;text-align:left">SÌ</div>
<div class="abs no" style="left:1289.70px;top:576.25px;width:58.10px">NO</div>
<div class="abs td" style="left:1368.20px;top:576.25px;width:76.00px;text-align:right">-175</div>
<div class="abs" style="left:270px;top:683.00px;width:1406px;height:1px;background:#dee2e6"></div>
<div class="abs" style="left:270px;top:684.00px;width:20px;height:97.5px;background:#ffffff"></div>
<div class="abs" style="left:290px;top:684.00px;width:1386.2px;height:97.5px;background:#f08080"></div>
<div class="cbx" style="left:274.3px;top:726.75px"></div>
<div class="abs td" style="left:299.75px;top:694.25px;width:89.05px;text-align:left">Fattura<br>immediata di<br>acquisto<br>numero 3</div>
<div class="abs td" style="left:408.30px;top:694.25px;width:61.70px;text-align:right">3</div>
<div class="abs td" style="left:489.50px;top:694.25px;width:83.20px;text-align:left">Stefano<br>Bianchi</div>
<div class="abs td" style="left:592.20px;top:694.25px;width:140.80px;text-align:left">Bollettino bancario</div>
<div class="abs td" style="left:752.50px;top:694.25px;width:80.10px;text-align:center">13/03/2025</div>
<div class="abs td" style="left:852.10px;top:694.25px;width:74.80px;text-align:center">14/03/2025</div>
<div class="abs td" style="left:946.40px;top:694.25px;width:69.40px;text-align:right">-77.670,08</div>
<div class="abs td" style="left:1035.30px;top:694.25px;width:59.70px;text-align:right">0,00</div>
<div class="abs td" style="left:1114.50px;top:694.25px;width:69.40px;text-align:right">-77.670,08</div>
<div class="abs td" style="left:1203.40px;top:694.25px;width:67.70px;text-align:left">SÌ</div>
<div class="abs no" style="left:1289.70px;top:694.25px;width:58.10px">NO</div>
<div class="abs td" style="left:1368.20px;top:694.25px;width:76.00px;text-align:right">-161</div>
<div class="abs" style="left:270px;top:781.50px;width:1406px;height:1px;background:#dee2e6"></div>
<div class="abs" style="left:270px;top:782.50px;width:20px;height:117.0px;background:#f8f8f8"></div>
<div class="abs" style="left:290px;top:782.50px;width:1386.2px;height:117.0px;background:#e87c7c"></div>
<div class="cbx" style="left:274.3px;top:835.00px"></div>
<div class="abs td" style="left:299.75px;top:792.75px;width:89.05px;text-align:left">Fattura<br>immediata di<br>vendita<br>numero<br>0002/2025</div>
<div class="abs td" style="left:408.30px;top:792.75px;width:61.70px;text-align:right">0002/2025</div>
<div class="abs td" style="left:489.50px;top:792.75px;width:83.20px;text-align:left">Mario Rossi</div>
<div class="abs td" style="left:592.20px;top:792.75px;width:140.80px;text-align:left">Bonifico 30gg d.f.f.m.</div>
<div class="abs td" style="left:752.50px;top:792.75px;width:80.10px;text-align:center">21/02/2025</div>
<div class="abs td" style="left:852.10px;top:792.75px;width:74.80px;text-align:center">31/03/2025</div>
<div class="abs td" style="left:946.40px;top:792.75px;width:69.40px;text-align:right">55.962,62</div>
<div class="abs td" style="left:1035.30px;top:792.75px;width:59.70px;text-align:right">0,00</div>
<div class="abs td" style="left:1114.50px;top:792.75px;width:69.40px;text-align:right">55.962,62</div>
<div class="abs td" style="left:1203.40px;top:792.75px;width:67.70px;text-align:left">SÌ</div>
<div class="abs no" style="left:1289.70px;top:792.75px;width:58.10px">NO</div>
<div class="abs td" style="left:1368.20px;top:792.75px;width:76.00px;text-align:right">-144</div>
<div class="abs" style="left:270px;top:899.50px;width:1406px;height:1px;background:#dee2e6"></div>
<div class="abs" style="left:270px;top:900.50px;width:20px;height:97.5px;background:#ffffff"></div>
<div class="abs" style="left:290px;top:900.50px;width:1386.2px;height:97.5px;background:#f08080"></div>
<div class="cbx" style="left:274.3px;top:943.25px"></div>
<div class="abs td" style="left:299.75px;top:910.75px;width:89.05px;text-align:left">Fattura<br>immediata di<br>acquisto<br>numero 4</div>
<div class="abs td" style="left:408.30px;top:910.75px;width:61.70px;text-align:right">4</div>
<div class="abs td" style="left:489.50px;top:910.75px;width:83.20px;text-align:left">Stefano<br>Bianchi</div>
<div class="abs td" style="left:592.20px;top:910.75px;width:140.80px;text-align:left">Bancomat</div>
<div class="abs td" style="left:752.50px;top:910.75px;width:80.10px;text-align:center">17/04/2025</div>
<div class="abs td" style="left:852.10px;top:910.75px;width:74.80px;text-align:center">17/04/2025</div>
<div class="abs td" style="left:946.40px;top:910.75px;width:69.40px;text-align:right">-103.118,06</div>
<div class="abs td" style="left:1035.30px;top:910.75px;width:59.70px;text-align:right">0,00</div>
<div class="abs td" style="left:1114.50px;top:910.75px;width:69.40px;text-align:right">-103.118,06</div>
<div class="abs td" style="left:1203.40px;top:910.75px;width:67.70px;text-align:left">SÌ</div>
<div class="abs no" style="left:1289.70px;top:910.75px;width:58.10px">NO</div>
<div class="abs td" style="left:1368.20px;top:910.75px;width:76.00px;text-align:right">-127</div>
</div>
<div class="abs" style="left:270px;top:923px;width:1406px;height:1px;background:#d6d9dc"></div>
<div class="abs" style="left:1676.2px;top:369px;width:11.8px;height:555px;background:#cdcdcd"></div>
<div class="abs" style="left:1679.3px;top:372px;width:6px;height:114px;border-radius:3px;background:#7e8283"></div>
</div>
<div id="cs">
<svg class="abs" style="left:10px;top:15px" width="22" height="22" viewBox="0 0 22 22" ><path d="M8 13.8 L5.2 16.6" stroke="#3c8dbc" stroke-width="2" stroke-linecap="round"/><path d="M7.5 10 Q8.5 6.8 10.8 7.3 L14.3 10.8 Q14.8 13.2 11.7 14.2 Q9 15 7.8 13.5 Q6.8 12 7.5 10Z" fill="#3c8dbc"/><path d="M11.2 8 L13.5 5.3M13.3 10.6 L16.3 8.2" stroke="#3c8dbc" stroke-width="1.7" stroke-linecap="round"/></svg>
<div class="abs" style="left:35.3px;top:14.85px;color:#868b90">PLUGIN</div>
<div class="abs" style="left:0;top:44px;width:200px;height:1px;background:#e9ecef"></div>
<div class="abs" style="left:2px;top:56px;width:197px;height:40px;background:#007bff;border-radius:1px"></div>
<div class="abs" style="left:17.5px;top:66.65px;color:#fff">Scadenzario</div>
<div class="abs" style="left:0;top:96px;width:200px;height:44px;background:#f6f7f9"></div>
<div class="abs" style="left:17.5px;top:109.35px;color:#6c757d">Presentazioni Bancarie</div>
<div class="abs" style="left:0;top:140px;width:200px;height:1px;background:#e2e5e8"></div>
</div>
<div class="abs" style="left:1668.5px;top:120px;width:40px;height:40px;background:#f8f9fa;border-radius:6px 0 0 6px;box-shadow:-2px 2px 6px rgba(0,0,0,.08);z-index:4"></div>
<div class="abs" style="z-index:4;left:0;top:0"><svg class="abs" style="left:1683px;top:132.5px" width="11" height="15" viewBox="0 0 11 15" ><path d="M2.5 1.8 L8.2 7.5 L2.5 13.2" fill="none" stroke="#3c8dbc" stroke-width="3"/></svg></div>
<div class="abs" style="left:1688px;top:47px;width:20px;height:877px;background:linear-gradient(to right,rgba(0,0,0,0),rgba(0,0,0,.035));z-index:2"></div>
<div id="scroll"><div class="th"></div></div>
</body></html>
